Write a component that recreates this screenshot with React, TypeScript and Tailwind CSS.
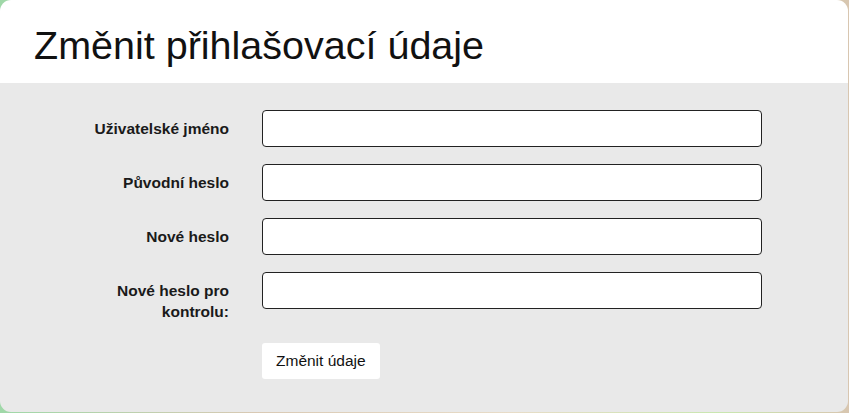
export default function App() {
  const fields = [
    { label: 'Uživatelské jméno', type: 'text' },
    { label: 'Původní heslo', type: 'password' },
    { label: 'Nové heslo', type: 'password' },
    { label: 'Nové heslo pro kontrolu:', type: 'password' },
  ];

  return (
    <div className="w-[849px] h-[413px] overflow-hidden bg-[linear-gradient(90deg,#9fd8a8,#d9c9b4_30%,#e8dcc8_60%,#c9e7b0_85%,#d8c6b0)] font-['Liberation_Sans',Arial,sans-serif]">
      <div className="w-[848px] h-[412px] rounded-[11px] overflow-hidden flex flex-col">
        {/* Header */}
        <div className="h-[83px] bg-white flex items-center px-[34px] shrink-0">
          <h1 className="text-[39.5px] leading-none text-[#111] pt-[8px]">Změnit přihlašovací údaje</h1>
        </div>

        {/* Form */}
        <div className="flex-1 bg-[#e9e9e9] pt-[27px]">
          <form className="flex flex-col gap-[17px]" onSubmit={(e) => e.preventDefault()}>
            {fields.map((f, i) => (
              <div key={i} className="flex items-start">
                <label className="w-[150px] ml-[79px] text-right text-[15.5px] font-bold leading-[21px] text-[#1a1a1a] pt-[8px]">
                  {f.label}
                </label>
                <input
                  type={f.type}
                  className="ml-[33px] w-[500px] h-[37px] bg-white border border-[#222] rounded-[4px] px-2 text-[15px] outline-none"
                />
              </div>
            ))}
            <div className="flex pl-[262px] pt-[4px]">
              <button
                type="submit"
                className="h-[36px] px-[14px] bg-white rounded-[3px] text-[15.5px] text-[#111]"
              >
                Změnit údaje
              </button>
            </div>
          </form>
        </div>
      </div>
    </div>
  );
}
